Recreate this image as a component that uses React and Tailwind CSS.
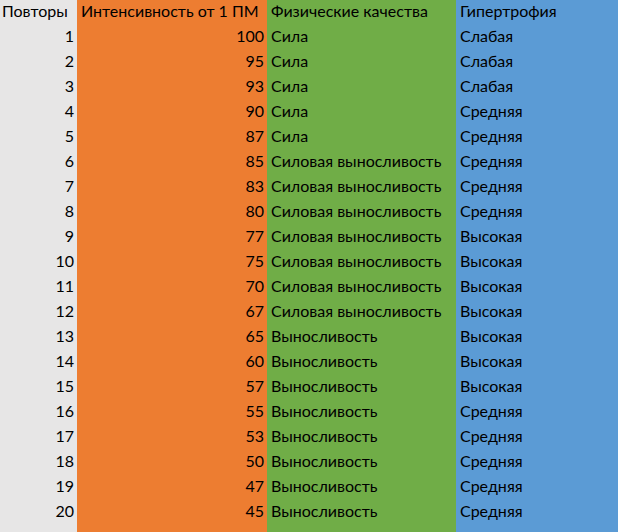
import React from 'react';

const ROWS = [
  [1, 100, 'Сила', 'Слабая'],
  [2, 95, 'Сила', 'Слабая'],
  [3, 93, 'Сила', 'Слабая'],
  [4, 90, 'Сила', 'Средняя'],
  [5, 87, 'Сила', 'Средняя'],
  [6, 85, 'Силовая выносливость', 'Средняя'],
  [7, 83, 'Силовая выносливость', 'Средняя'],
  [8, 80, 'Силовая выносливость', 'Средняя'],
  [9, 77, 'Силовая выносливость', 'Высокая'],
  [10, 75, 'Силовая выносливость', 'Высокая'],
  [11, 70, 'Силовая выносливость', 'Высокая'],
  [12, 67, 'Силовая выносливость', 'Высокая'],
  [13, 65, 'Выносливость', 'Высокая'],
  [14, 60, 'Выносливость', 'Высокая'],
  [15, 57, 'Выносливость', 'Высокая'],
  [16, 55, 'Выносливость', 'Средняя'],
  [17, 53, 'Выносливость', 'Средняя'],
  [18, 50, 'Выносливость', 'Средняя'],
  [19, 47, 'Выносливость', 'Средняя'],
  [20, 45, 'Выносливость', 'Средняя'],
];

const cell = "h-[25px] pb-[3px] flex items-center whitespace-nowrap";

export default function App() {
  return (
    <div
      className="w-[618px] h-[532px] overflow-hidden grid grid-cols-[77px_190px_189px_1fr] text-[16px] text-black"
      style={{ fontFamily: 'Lato, "Open Sans", sans-serif' }}
    >
      <div className="bg-[#e7e6e6] flex flex-col">
        <div className={`${cell} pl-[2px]`}>Повторы</div>
        {ROWS.map(r => (
          <div key={r[0]} className={`${cell} justify-end pr-[3px]`}>{r[0]}</div>
        ))}
      </div>
      <div className="bg-[#ed7d31] flex flex-col">
        <div className={`${cell} pl-[4px]`}>Интенсивность от 1 ПМ</div>
        {ROWS.map(r => (
          <div key={r[0]} className={`${cell} justify-end pr-[3px]`}>{r[1]}</div>
        ))}
      </div>
      <div className="bg-[#70ad47] flex flex-col">
        <div className={`${cell} pl-[4px]`}>Физические качества</div>
        {ROWS.map(r => (
          <div key={r[0]} className={`${cell} pl-[4px]`}>{r[2]}</div>
        ))}
      </div>
      <div className="bg-[#5b9bd5] flex flex-col">
        <div className={`${cell} pl-[4px]`}>Гипертрофия</div>
        {ROWS.map(r => (
          <div key={r[0]} className={`${cell} pl-[4px]`}>{r[3]}</div>
        ))}
      </div>
    </div>
  );
}
